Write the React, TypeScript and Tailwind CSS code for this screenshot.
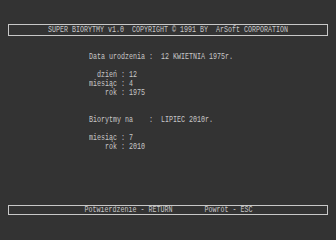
const lines = [
  'Data urodzenia :  12 KWIETNIA 1975r.',
  '',
  '  dzień : 12',
  'miesiąc : 4',
  '    rok : 1975',
  '',
  '',
  'Biorytmy na    :  LIPIEC 2010r.',
  '',
  'miesiąc : 7',
  '    rok : 2010',
]

// ekran DOS-owy, siatka znaków 4px x 9px
export default function App() {
  return (
    <div className="h-[240px] w-[336px] overflow-hidden bg-[#333333] px-[8px] pt-[24px] font-['Liberation_Mono',monospace] text-[9px] leading-[9px] text-[#c8c8c8]">
      <div className="flex h-[12px] items-center justify-center border border-[#c8c8c8]">
        <span className="shrink-0 scale-x-[0.7407] whitespace-pre">
          SUPER BIORYTMY v1.0  COPYRIGHT © 1991 BY  ArSoft CORPORATION
        </span>
      </div>

      <div className="mt-[17px] ml-[81px] origin-left scale-x-[0.7407]">
        {lines.map((l, i) => (
          <div key={i} className="h-[9px] whitespace-pre">
            {l}
          </div>
        ))}
      </div>

      <div className="mt-[53px] flex h-[10px] items-center justify-center border border-[#c8c8c8]">
        <span className="shrink-0 scale-x-[0.7407] whitespace-pre">
          Potwierdzenie - RETURN        Powrót - ESC
        </span>
      </div>
    </div>
  )
}
